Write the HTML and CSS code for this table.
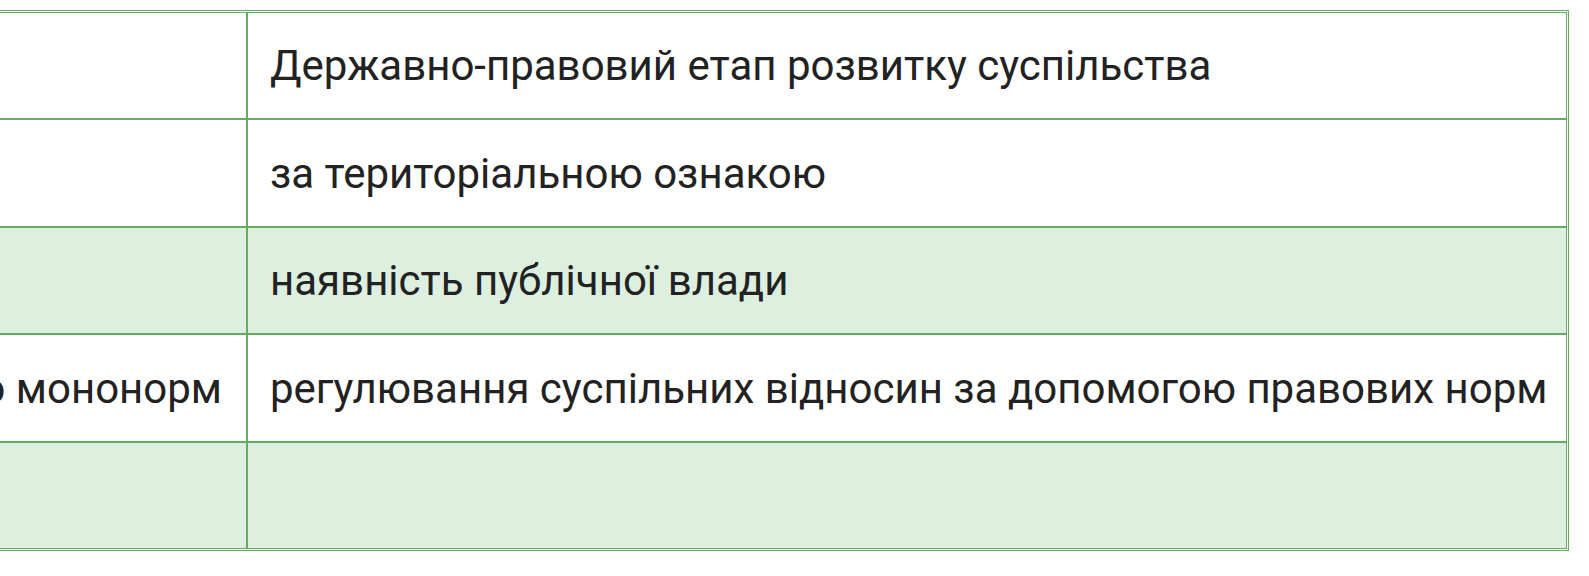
FILE: index.html
```html
<!DOCTYPE html>
<html lang="uk">
<head>
<meta charset="utf-8">
<title>Порівняння етапів розвитку суспільства</title>
<link rel="stylesheet" href="styles.css">
</head>
<body>
<div class="frame">
  <table class="compare">
    <colgroup>
      <col class="col-left">
      <col class="col-right">
    </colgroup>
    <tbody>
      <tr class="row r1">
        <td class="cell left"><div class="clip"></div></td>
        <td class="cell right">Державно-правовий етап розвитку суспільства</td>
      </tr>
      <tr class="row r2">
        <td class="cell left"><div class="clip"></div></td>
        <td class="cell right">за територіальною ознакою</td>
      </tr>
      <tr class="row r3 shaded">
        <td class="cell left"><div class="clip"></div></td>
        <td class="cell right">наявність публічної влади</td>
      </tr>
      <tr class="row r4">
        <td class="cell left"><div class="clip end"><span>регулювання суспільних відносин за допомогою мононорм</span></div></td>
        <td class="cell right">регулювання суспільних відносин за допомогою правових норм</td>
      </tr>
      <tr class="row r5 shaded">
        <td class="cell left"><div class="clip"></div></td>
        <td class="cell right"></td>
      </tr>
    </tbody>
  </table>
</div>
</body>
</html>
```

FILE: styles.css
```css
html, body {
  margin: 0;
  padding: 0;
  background: #ffffff;
}

.frame {
  width: 1589px;
  height: 576px;
  overflow: hidden;
  padding-top: 10px;
  box-sizing: border-box;
}

.compare {
  width: 1609px;
  margin-left: -40px;
  border: 1px solid #63ad63;
  padding: 1px;
  border-collapse: separate;
  border-spacing: 0;
  table-layout: fixed;
  background: #ffffff;
  font-family: Roboto, "Noto Sans", "Liberation Sans", sans-serif;
  font-size: 42px;
  color: #222222;
}

.col-left { width: 285px; }
.col-right { width: 1320px; }

.cell {
  border: 1px solid #63ad63;
  padding: 0;
  vertical-align: middle;
  white-space: nowrap;
  overflow: hidden;
  box-sizing: border-box;
}

.right {
  padding: 0 20px 0 22px;
}

.clip {
  display: flex;
  justify-content: flex-start;
  overflow: hidden;
  padding-right: 24px;
}

.clip.end {
  justify-content: flex-end;
}

.clip.end span {
  flex: none;
}

.r1 .cell, .r3 .cell, .r5 .cell { height: 107px; }
.r2 .cell, .r4 .cell { height: 108px; }

.shaded .cell {
  background: #ddefdf;
}
```
